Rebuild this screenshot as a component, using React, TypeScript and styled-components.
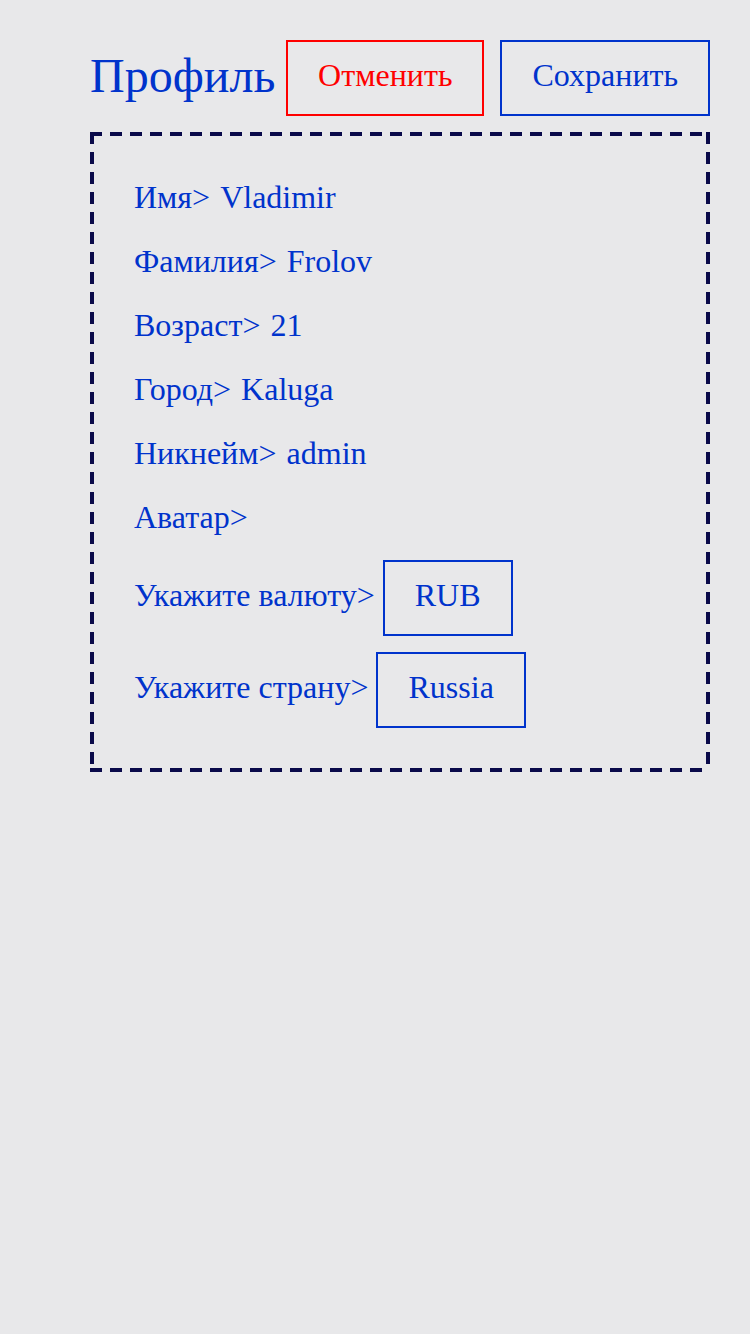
import React from "react";
import styled, { createGlobalStyle } from "styled-components";

const Global = createGlobalStyle`
  html, body { margin: 0; padding: 0; background: #e8e8ea; }
  body { font-family: "Liberation Serif", "Times New Roman", serif; }
`;

const Page = styled.div`
  min-height: 1334px;
  background: #e8e8ea;
  padding: 40px 40px 0 90px;
  box-sizing: border-box;
  display: flex;
  flex-direction: column;
  gap: 16px;
`;

const Header = styled.div`
  display: flex;
  align-items: center;
  gap: 11px;
`;

const Title = styled.h1`
  margin: 0;
  font-weight: normal;
  font-size: 48px;
  color: #0033cc;
  line-height: 1;
  padding-bottom: 4px;
`;

const Buttons = styled.div`
  display: flex;
  gap: 16px;
`;

const Button = styled.button<{ $tone: "red" | "blue"; $w: number }>`
  font-family: "Liberation Serif", "Times New Roman", serif;
  font-size: 32px;
  height: 76px;
  width: ${(p) => p.$w}px;
  background: transparent;
  border: 2px solid ${(p) => (p.$tone === "red" ? "#ff0000" : "#0033cc")};
  color: ${(p) => (p.$tone === "red" ? "#ff0000" : "#0033cc")};
  padding: 0 0 6px;
  box-sizing: border-box;
`;

const dash = "#0a0a4a";

const Card = styled.div`
  padding: 44px;
  display: flex;
  flex-direction: column;
  gap: 27px;
  background:
    linear-gradient(90deg, ${dash} 12px, transparent 0) top left / 20px 4px repeat-x,
    linear-gradient(90deg, ${dash} 12px, transparent 0) bottom left / 20px 4px repeat-x,
    linear-gradient(180deg, ${dash} 12px, transparent 0) top left / 4px 20px repeat-y,
    linear-gradient(180deg, ${dash} 12px, transparent 0) top right / 4px 20px repeat-y;
`;

const Row = styled.div`
  display: flex;
  gap: 10px;
  font-size: 32px;
  color: #0033cc;
  line-height: 31px;
  padding-top: 6px;
`;

const SelectGroup = styled.div`
  display: flex;
  flex-direction: column;
  gap: 16px;
`;

const SelectRow = styled.div`
  display: flex;
  align-items: center;
  gap: 8px;
  font-size: 32px;
  color: #0033cc;
`;

const SelectLabel = styled.span`
  padding-bottom: 6px;
`;

const SelectBox = styled.div`
  height: 76px;
  box-sizing: border-box;
  border: 2px solid #0033cc;
  padding: 0 30px 6px;
  display: flex;
  align-items: center;
`;

export default function App() {
  const fields = [
    ["Имя", "Vladimir"],
    ["Фамилия", "Frolov"],
    ["Возраст", "21"],
    ["Город", "Kaluga"],
    ["Никнейм", "admin"],
    ["Аватар", ""],
  ];
  return (
    <>
      <Global />
      <Page>
        <Header>
          <Title>Профиль</Title>
          <Buttons>
            <Button $tone="red" $w={198}>Отменить</Button>
            <Button $tone="blue" $w={210}>Сохранить</Button>
          </Buttons>
        </Header>
        <Card>
          {fields.map(([k, v]) => (
            <Row key={k}>
              <span>{k}&gt;</span>
              {v && <span>{v}</span>}
            </Row>
          ))}
          <SelectGroup>
            <SelectRow>
              <SelectLabel>Укажите валюту&gt;</SelectLabel>
              <SelectBox>RUB</SelectBox>
            </SelectRow>
            <SelectRow>
              <SelectLabel>Укажите страну&gt;</SelectLabel>
              <SelectBox>Russia</SelectBox>
            </SelectRow>
          </SelectGroup>
        </Card>
      </Page>
    </>
  );
}
